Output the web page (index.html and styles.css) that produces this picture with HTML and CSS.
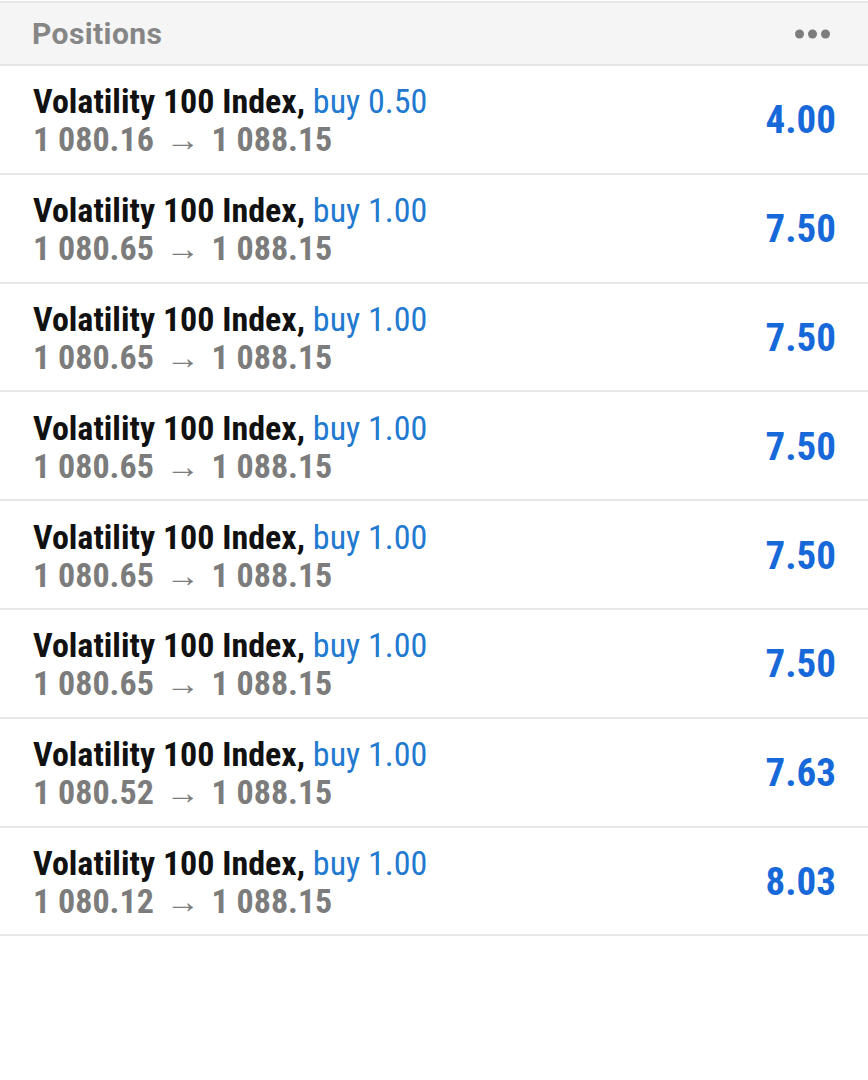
FILE: index.html
```html
<!DOCTYPE html>
<html lang="en">
<head>
  <meta charset="UTF-8">
  <meta name="viewport" content="width=device-width, initial-scale=1.0">
  <title>Positions</title>
  <link rel="stylesheet" href="styles.css">
</head>
<body>
  <div class="panel">
    <div class="panel-header">
      <span class="panel-title">Positions</span>
      <svg class="more" width="35" height="10" viewBox="0 0 35 10">
        <circle cx="4.5" cy="5" r="4.5" fill="#7d7d7d"/>
        <circle cx="17.5" cy="5" r="4.5" fill="#7d7d7d"/>
        <circle cx="30.5" cy="5" r="4.5" fill="#7d7d7d"/>
      </svg>
    </div>

    <ul class="positions">
      <li class="position">
        <div class="info">
          <div class="symbol">Volatility 100 Index, <span class="side">buy 0.50</span></div>
          <div class="prices">1 080.16 <span class="arrow">&rarr;</span> 1 088.15</div>
        </div>
        <div class="profit">4.00</div>
      </li>
      <li class="position">
        <div class="info">
          <div class="symbol">Volatility 100 Index, <span class="side">buy 1.00</span></div>
          <div class="prices">1 080.65 <span class="arrow">&rarr;</span> 1 088.15</div>
        </div>
        <div class="profit">7.50</div>
      </li>
      <li class="position">
        <div class="info">
          <div class="symbol">Volatility 100 Index, <span class="side">buy 1.00</span></div>
          <div class="prices">1 080.65 <span class="arrow">&rarr;</span> 1 088.15</div>
        </div>
        <div class="profit">7.50</div>
      </li>
      <li class="position">
        <div class="info">
          <div class="symbol">Volatility 100 Index, <span class="side">buy 1.00</span></div>
          <div class="prices">1 080.65 <span class="arrow">&rarr;</span> 1 088.15</div>
        </div>
        <div class="profit">7.50</div>
      </li>
      <li class="position">
        <div class="info">
          <div class="symbol">Volatility 100 Index, <span class="side">buy 1.00</span></div>
          <div class="prices">1 080.65 <span class="arrow">&rarr;</span> 1 088.15</div>
        </div>
        <div class="profit">7.50</div>
      </li>
      <li class="position">
        <div class="info">
          <div class="symbol">Volatility 100 Index, <span class="side">buy 1.00</span></div>
          <div class="prices">1 080.65 <span class="arrow">&rarr;</span> 1 088.15</div>
        </div>
        <div class="profit">7.50</div>
      </li>
      <li class="position">
        <div class="info">
          <div class="symbol">Volatility 100 Index, <span class="side">buy 1.00</span></div>
          <div class="prices">1 080.52 <span class="arrow">&rarr;</span> 1 088.15</div>
        </div>
        <div class="profit">7.63</div>
      </li>
      <li class="position">
        <div class="info">
          <div class="symbol">Volatility 100 Index, <span class="side">buy 1.00</span></div>
          <div class="prices">1 080.12 <span class="arrow">&rarr;</span> 1 088.15</div>
        </div>
        <div class="profit">8.03</div>
      </li>
    </ul>
  </div>
</body>
</html>
```

FILE: styles.css
```css
body {
  margin: 0;
  background-color: #fff;
  font-family: "Roboto Condensed", "Liberation Sans Narrow", "Liberation Sans", sans-serif;
}

.panel {
  padding-top: 1px;
}

.panel-header {
  display: flex;
  justify-content: space-between;
  align-items: center;
  height: 61px;
  padding: 0 38px 0 32px;
  background-color: #f5f5f5;
  border-top: 2px solid #e6e6e6;
  border-bottom: 2px solid #e6e6e6;
}

.panel-title {
  font-family: Roboto, "Liberation Sans", sans-serif;
  font-size: 30px;
  font-weight: bold;
  letter-spacing: 0.4px;
  color: #868686;
}

.positions {
  list-style: none;
  margin: 0;
  padding: 0;
}

/* 104.8 + 2 + 2 = 108.8px per row */
.position {
  display: flex;
  justify-content: space-between;
  align-items: center;
  height: 104.8px;
  padding: 2px 32px 0 33px;
  box-sizing: content-box;
  border-bottom: 2px solid #e8e8e8;
}

.symbol {
  font-size: 34px;
  font-weight: bold;
  color: #111;
  line-height: 38px;
}

.side {
  font-weight: normal;
  color: #2279d0;
}

.prices {
  font-size: 34px;
  font-weight: bold;
  color: #7c7c7c;
  line-height: 38px;
}

.arrow {
  font-weight: normal;
  margin: 0 4px;
}

.profit {
  font-size: 39px;
  font-weight: bold;
  color: #1769d9;
}
```
